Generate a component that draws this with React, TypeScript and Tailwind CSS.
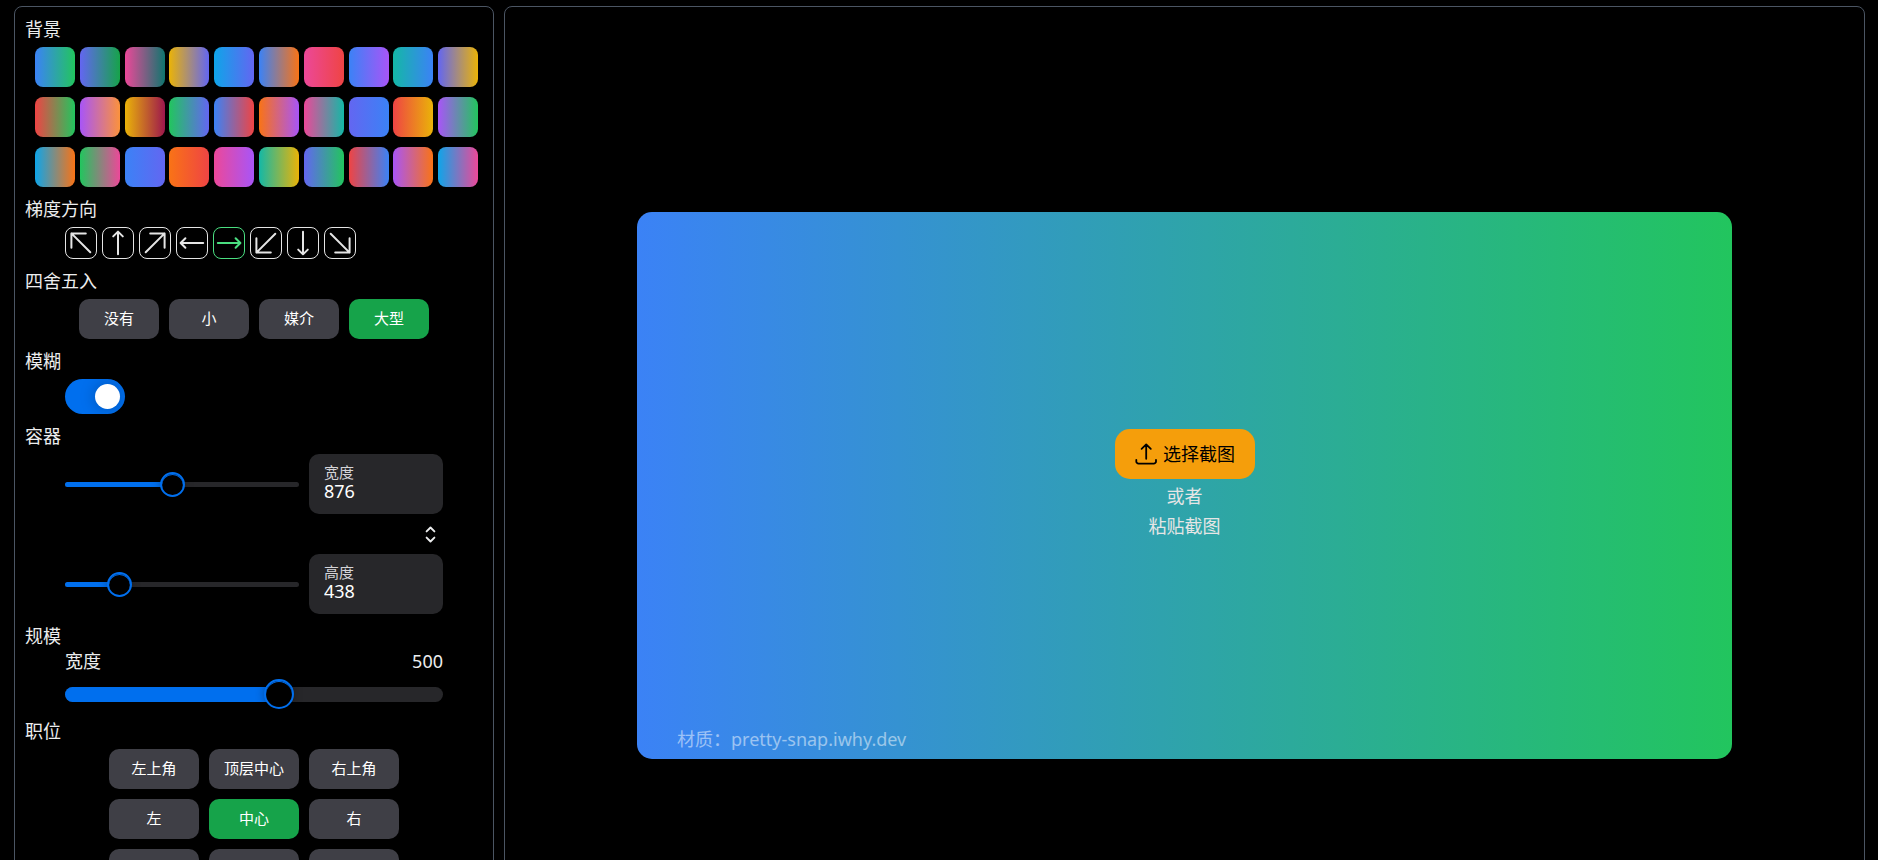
import { useState } from 'react';
import type { ReactNode } from 'react';
import clsx from 'clsx';

const blue = '#3b82f6';
const green = '#22c55e';
const indigo = '#6366f1';
const pink = '#ec4899';
const yellow = '#eab308';
const sky = '#0ea5e9';
const orange = '#f97316';
const red = '#ef4444';
const purple = '#a855f7';
const teal = '#14b8a6';

const gradients: [string, string][] = [
  [blue, green], [indigo, '#16a34a'], [pink, '#0f766e'], [yellow, indigo], [sky, indigo],
  [blue, orange], [pink, red], [blue, purple], [teal, blue], [indigo, yellow],
  [red, green], [purple, '#fb923c'], [yellow, '#9d174d'], [green, indigo], [blue, red],
  [orange, purple], [pink, teal], [indigo, blue], [red, yellow], [purple, green],
  [sky, orange], [green, pink], [blue, indigo], [orange, red], [pink, purple],
  [teal, yellow], [indigo, green], [red, blue], [purple, orange], [sky, pink],
];

const STRAIGHT = 'M16 27.2V4.8M11.2 9.4L16 4.6L20.8 9.4';
const DIAGONAL = 'M6.4 20.8V6.4H20.8M6.4 6.4L25.3 25.3';

const directions = [
  { to: 'to top left', path: DIAGONAL, turn: 0 },
  { to: 'to top', path: STRAIGHT, turn: 0 },
  { to: 'to top right', path: DIAGONAL, turn: 90 },
  { to: 'to left', path: STRAIGHT, turn: 270 },
  { to: 'to right', path: STRAIGHT, turn: 90 },
  { to: 'to bottom left', path: DIAGONAL, turn: 270 },
  { to: 'to bottom', path: STRAIGHT, turn: 180 },
  { to: 'to bottom right', path: DIAGONAL, turn: 180 },
];

const roundings = ['没有', '小', '媒介', '大型'];
const positions = ['左上角', '顶层中心', '右上角', '左', '中心', '右', '左下角', '底部中心', '右下角'];

function Section({ title, children }: { title: string; children: ReactNode }) {
  return (
    <section>
      <h2>{title}</h2>
      {children}
    </section>
  );
}

function Choice({ text, active, wide, onClick }: { text: string; active: boolean; wide?: boolean; onClick: () => void }) {
  return (
    <button
      type="button"
      aria-pressed={active}
      onClick={onClick}
      className={clsx(
        'h-10 rounded-[10px] pb-0.5 text-[15px] text-white',
        wide ? 'w-[90px]' : 'w-20',
        active ? 'bg-[#16a34a]' : 'bg-[#3f3f46]',
      )}
    >
      {text}
    </button>
  );
}

function SizeRow({ id, label, value, onChange }: { id: string; label: string; value: number; onChange: (v: number) => void }) {
  return (
    <div className="flex items-center gap-2.5">
      <div className="relative flex h-[25px] flex-1 items-center">
        <div className="h-[5px] w-full overflow-hidden rounded-full bg-[#27272a]">
          <div className="h-full bg-[#006fee]" style={{ width: `${(value / 1900) * 100}%` }} />
        </div>
        <input
          type="range"
          aria-label={label}
          min={0}
          max={1900}
          value={value}
          onChange={(e) => onChange(Number(e.target.value))}
          className="absolute inset-y-0 -left-3 w-[calc(100%+24px)] cursor-pointer appearance-none bg-transparent [&::-webkit-slider-thumb]:size-[25px] [&::-webkit-slider-thumb]:appearance-none [&::-webkit-slider-thumb]:rounded-full [&::-webkit-slider-thumb]:border-2 [&::-webkit-slider-thumb]:border-[#006fee] [&::-webkit-slider-thumb]:bg-black [&::-webkit-slider-thumb]:shadow-[inset_0_1px_0_#006fee,0_0_10px_rgba(0,0,0,0.3)]"
        />
      </div>
      <div className="flex h-[60px] w-[134px] flex-col justify-center rounded-[10px] bg-[#27272a] px-[15px] pb-1">
        <label htmlFor={id} className="text-[15px] leading-[18px] text-[#d4d4d8]">{label}</label>
        <input
          id={id}
          type="text"
          inputMode="numeric"
          value={value}
          onChange={(e) => onChange(Number(e.target.value) || 0)}
          className="w-full bg-transparent text-[18px] leading-[20px] text-white outline-none"
        />
      </div>
    </div>
  );
}

export default function App() {
  const [gradient, setGradient] = useState(0);
  const [direction, setDirection] = useState('to right');
  const [rounding, setRounding] = useState('大型');
  const [position, setPosition] = useState('中心');
  const [blur, setBlur] = useState(true);
  const [width, setWidth] = useState(876);
  const [height, setHeight] = useState(438);
  const [scale, setScale] = useState(500);

  const paint = ([from, to]: [string, string]) => ({
    backgroundImage: `linear-gradient(${direction}, ${from}, ${to})`,
  });

  return (
    <main className="h-screen overflow-y-auto bg-black font-['Noto_Sans','Noto_Sans_CJK_SC',sans-serif] text-[18px] leading-[25px] text-[#ecedee] [scrollbar-width:none]">
      <div className="flex gap-2.5 pt-1.5 pr-[13px] pb-1.5 pl-3.5">
        <aside className="flex w-[480px] shrink-0 flex-col gap-2.5 rounded-lg border border-[#4b5563] px-2.5 pt-2.5 pb-[75px]">
          <Section title="背景">
            <div className="mt-[5px] grid grid-cols-10 gap-y-2.5 pl-2.5">
              {gradients.map((g, i) => (
                <button
                  key={i}
                  type="button"
                  aria-label={`背景 ${i + 1}`}
                  onClick={() => setGradient(i)}
                  className="size-10 rounded-lg"
                  style={paint(g)}
                />
              ))}
            </div>
          </Section>

          <Section title="梯度方向">
            <div className="mt-[5px] flex gap-[5px] pl-10">
              {directions.map((d) => (
                <button
                  key={d.to}
                  type="button"
                  aria-label={d.to}
                  aria-pressed={direction === d.to}
                  onClick={() => setDirection(d.to)}
                  className={clsx(
                    'flex size-8 items-center justify-center rounded-lg border',
                    direction === d.to ? 'border-[#4ade80] text-[#4ade80]' : 'border-[#e5e5e5] text-[#e5e5e5]',
                  )}
                >
                  <svg viewBox="0 0 32 32" className="size-8 shrink-0" fill="none" stroke="currentColor" strokeWidth="2" strokeLinecap="round" strokeLinejoin="round">
                    <path d={d.path} transform={`rotate(${d.turn} 16 16)`} />
                  </svg>
                </button>
              ))}
            </div>
          </Section>

          <Section title="四舍五入">
            <div className="mt-[5px] flex justify-center gap-2.5">
              {roundings.map((r) => (
                <Choice key={r} text={r} active={rounding === r} onClick={() => setRounding(r)} />
              ))}
            </div>
          </Section>

          <Section title="模糊">
            <div className="mt-[5px] flex pl-10">
              <input
                type="checkbox"
                role="switch"
                aria-label="模糊"
                checked={blur}
                onChange={(e) => setBlur(e.target.checked)}
                className="flex h-[35px] w-[60px] cursor-pointer appearance-none items-center overflow-hidden rounded-full bg-[#3f3f46] px-[5px] before:size-[25px] before:rounded-full before:bg-white before:shadow-[0_0_15px_rgba(0,0,0,0.25)] checked:justify-end checked:bg-[#006fee]"
              />
            </div>
          </Section>

          <Section title="容器">
            <div className="mt-[5px] flex flex-col px-10">
              <SizeRow id="box-width" label="宽度" value={width} onChange={setWidth} />
              <div className="flex h-10 items-center justify-end">
                <button
                  type="button"
                  aria-label="交换"
                  onClick={() => {
                    setWidth(height);
                    setHeight(width);
                  }}
                  className="flex size-[25px] items-center justify-center text-[#ecedee]"
                >
                  <svg viewBox="0 0 21 21" className="size-[21px]" fill="none" stroke="currentColor" strokeWidth="1.9" strokeLinecap="round" strokeLinejoin="round">
                    <path d="M6.6 7.4L10.5 3.5L14.4 7.4M6.6 13.6L10.5 17.5L14.4 13.6" />
                  </svg>
                </button>
              </div>
              <SizeRow id="box-height" label="高度" value={height} onChange={setHeight} />
            </div>
          </Section>

          <Section title="规模">
            <div className="px-10">
              <div className="flex justify-between">
                <label htmlFor="scale">宽度</label>
                <output htmlFor="scale">{scale}</output>
              </div>
              <div className="relative mt-[5px] flex h-[30px] items-center">
                <div className="h-[15px] w-full overflow-hidden rounded-full bg-[#27272a]">
                  <div className="h-full bg-[#006fee]" style={{ width: `${(scale / 876) * 100}%` }} />
                </div>
                <input
                  id="scale"
                  type="range"
                  min={0}
                  max={876}
                  value={scale}
                  onChange={(e) => setScale(Number(e.target.value))}
                  className="absolute inset-0 w-full cursor-pointer appearance-none bg-transparent [&::-webkit-slider-thumb]:size-[30px] [&::-webkit-slider-thumb]:appearance-none [&::-webkit-slider-thumb]:rounded-full [&::-webkit-slider-thumb]:border-2 [&::-webkit-slider-thumb]:border-[#006fee] [&::-webkit-slider-thumb]:bg-black [&::-webkit-slider-thumb]:shadow-[inset_0_1px_0_#006fee,0_0_10px_rgba(0,0,0,0.3)]"
                />
              </div>
            </div>
          </Section>

          <Section title="职位">
            <div className="mt-[5px] flex justify-center">
              <div className="grid grid-cols-3 gap-2.5">
                {positions.map((p) => (
                  <Choice key={p} text={p} wide active={position === p} onClick={() => setPosition(p)} />
                ))}
              </div>
            </div>
          </Section>
        </aside>

        <section className="flex min-w-0 flex-1 items-center justify-center rounded-lg border border-[#4b5563]">
          <div
            className="relative flex aspect-[2/1] w-full max-w-[1095px] flex-col items-center justify-center rounded-[15px] pb-0.5 leading-[30px] text-[#e5e5e5]"
            style={paint(gradients[gradient])}
          >
            <button type="button" className="mb-0.5 flex h-[50px] w-[140px] items-center justify-center gap-[5px] rounded-[15px] bg-[#f59e0b] text-black">
              <svg viewBox="0 0 24 24" className="size-6 shrink-0" fill="none" stroke="currentColor" strokeWidth="1.8" strokeLinecap="round" strokeLinejoin="round">
                <path d="M2.3 17.8V19.4A2.2 2.2 0 0 0 4.5 21.6H19.8A2.2 2.2 0 0 0 22 19.4V17.8M12.2 16.8V2.6M7.6 6.8L12.2 2.4L16.8 6.8" />
              </svg>
              选择截图
            </button>
            <p>或者</p>
            <p>粘贴截图</p>
            <p className="absolute bottom-[5px] left-10 text-white/50">材质：pretty-snap.iwhy.dev</p>
          </div>
        </section>
      </div>
    </main>
  );
}
